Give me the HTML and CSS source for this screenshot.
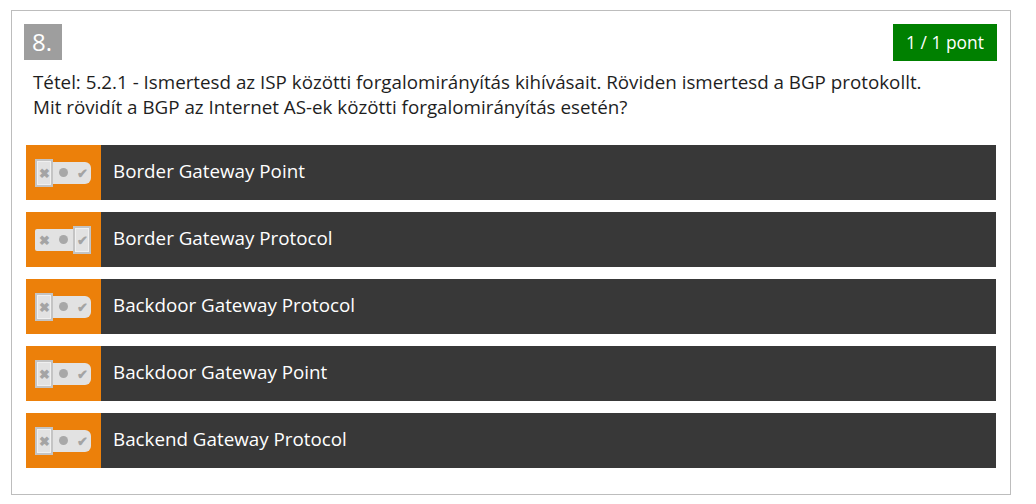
FILE: index.html
```html
<!DOCTYPE html>
<html lang="hu">
<head>
<meta charset="utf-8">
<link rel="stylesheet" href="styles.css">
</head>
<body>
<div class="card">
  <div class="head">
    <div class="num">8.</div>
    <div class="score">1 / 1 pont</div>
  </div>
  <div class="question">Tétel: 5.2.1 - Ismertesd az ISP közötti forgalomirányítás kihívásait. Röviden ismertesd a BGP protokollt.<br>Mit rövidít a BGP az Internet AS-ek közötti forgalomirányítás esetén?</div>
  <div class="answers">
    <div class="row">
      <div class="mark"><div class="tog sel-x"><span class="seg x">&#10006;</span><span class="seg dot"></span><span class="seg ok">&#10004;</span></div></div>
      <div class="label">Border Gateway Point</div>
    </div>
    <div class="row">
      <div class="mark"><div class="tog sel-ok"><span class="seg x">&#10006;</span><span class="seg dot"></span><span class="seg ok">&#10004;</span></div></div>
      <div class="label">Border Gateway Protocol</div>
    </div>
    <div class="row">
      <div class="mark"><div class="tog sel-x"><span class="seg x">&#10006;</span><span class="seg dot"></span><span class="seg ok">&#10004;</span></div></div>
      <div class="label">Backdoor Gateway Protocol</div>
    </div>
    <div class="row">
      <div class="mark"><div class="tog sel-x"><span class="seg x">&#10006;</span><span class="seg dot"></span><span class="seg ok">&#10004;</span></div></div>
      <div class="label">Backdoor Gateway Point</div>
    </div>
    <div class="row">
      <div class="mark"><div class="tog sel-x"><span class="seg x">&#10006;</span><span class="seg dot"></span><span class="seg ok">&#10004;</span></div></div>
      <div class="label">Backend Gateway Protocol</div>
    </div>
  </div>
</div>
</body>
</html>
```
FILE: styles.css
```css
* { box-sizing: border-box; }
body {
  margin: 0;
  background: #fff;
  font-family: "Open Sans", "Liberation Sans", sans-serif;
}
.card {
  margin: 10px 0 0 11px;
  width: 1000px;
  height: 485px;
  border: 1px solid #bdbdbd;
  padding: 13px 13px 0 12px;
}
.head {
  display: flex;
  justify-content: space-between;
  align-items: flex-start;
  height: 37px;
}
.num {
  background: #9e9e9e;
  color: #fff;
  width: 38px;
  height: 36px;
  font-size: 24px;
  line-height: 36px;
  padding-left: 8px;
}
.score {
  background: #008000;
  color: #fff;
  width: 104px;
  height: 37px;
  font-size: 17.4px;
  line-height: 37px;
  text-align: center;
}
.question {
  padding: 9px 0 0 9px;
  font-size: 18.8px;
  line-height: 25px;
  color: #1e1e1e;
  height: 84px;
}
.answers {
  display: flex;
  flex-direction: column;
  gap: 12px;
  margin: 0 1px 0 2px;
}
.row {
  display: flex;
  height: 55px;
  background: #383838;
}
.mark {
  width: 75px;
  background: #ec800a;
  display: flex;
  align-items: center;
  padding-left: 9px;
}
.tog {
  display: flex;
  align-items: center;
  width: 56px;
  height: 22px;
  background: #e2e2e2;
  border-radius: 2px 6px 6px 2px;
  position: relative;
}
.seg {
  width: 18px;
  height: 22px;
  display: flex;
  align-items: center;
  justify-content: center;
  color: #a4a4a4;
  font-size: 13px;
  font-weight: bold;
}
.seg.dot::before {
  content: "";
  width: 9px;
  height: 9px;
  border-radius: 50%;
  background: #a8a8a8;
}
.seg.x { width: 18px; }
.seg.dot { width: 20px; }
.seg.ok { width: 18px; }
.sel-x .x,
.sel-ok .ok {
  height: 28px;
  border: 2px solid #c4c4c4;
  background: #e2e2e2;
  box-shadow: inset 0 0 0 1px #f0f0f0;
}
.label {
  flex: 1;
  color: #fff;
  font-size: 18.8px;
  line-height: 53px;
  padding-left: 12px;
}
```
